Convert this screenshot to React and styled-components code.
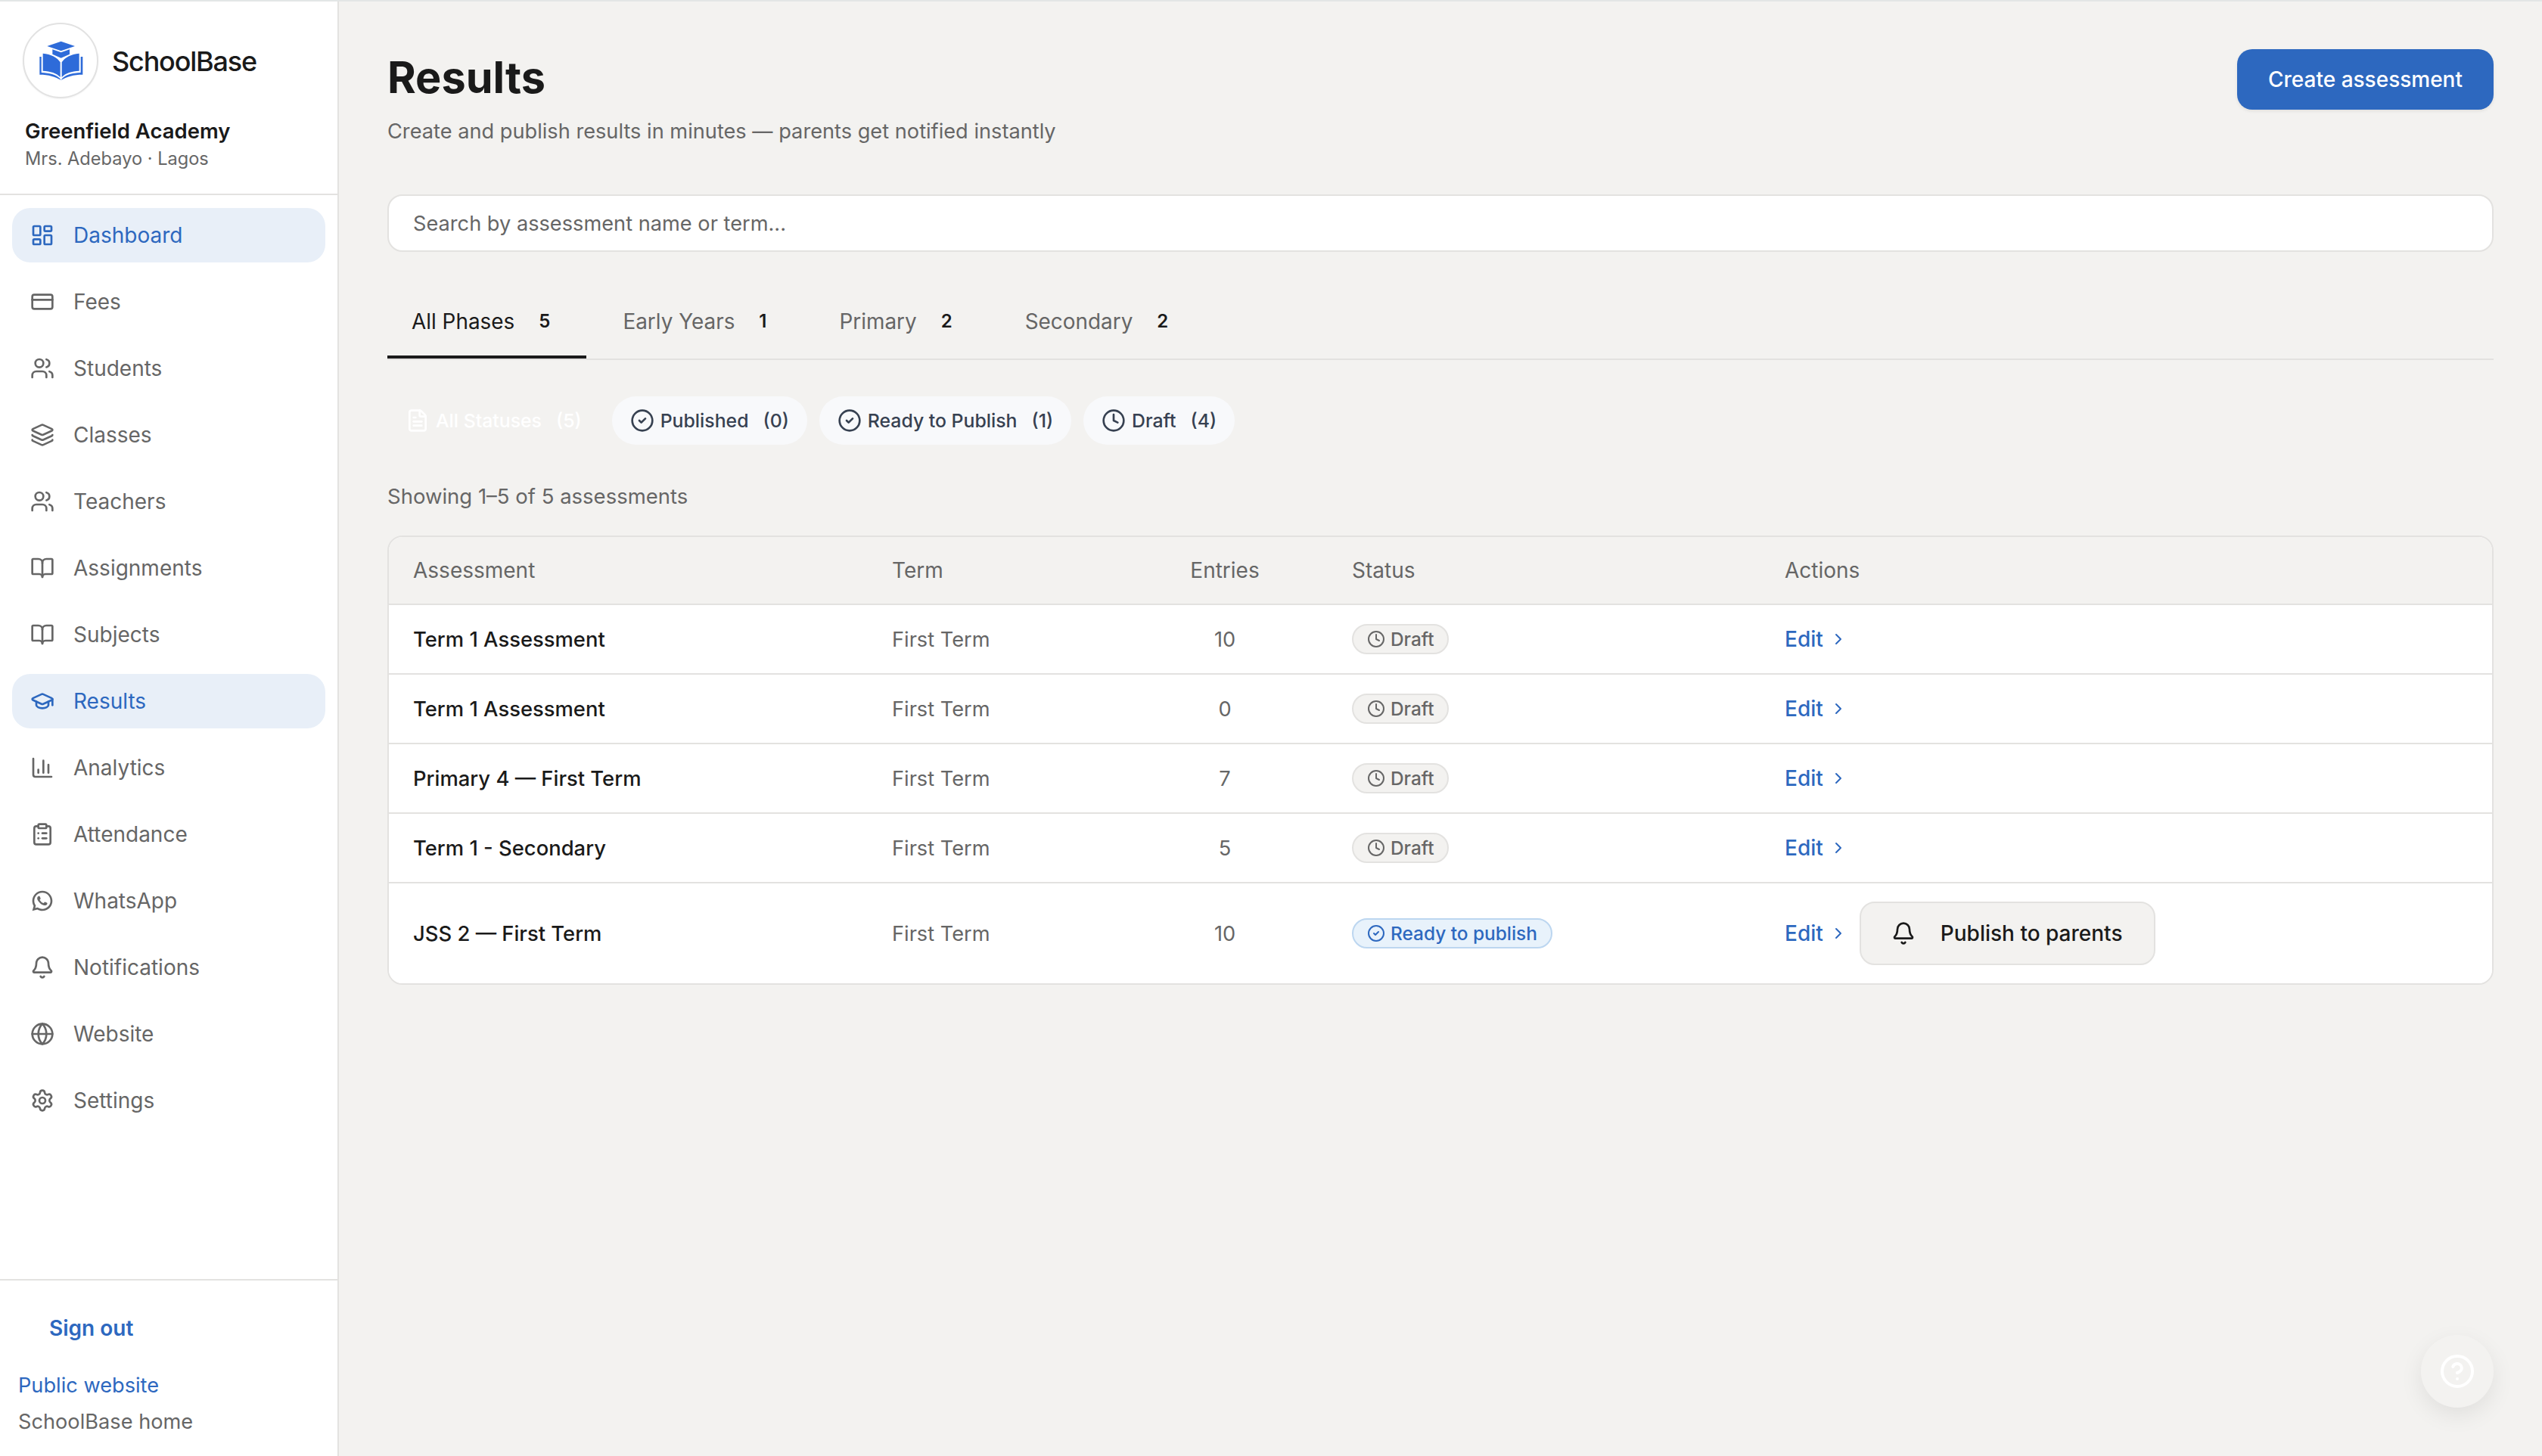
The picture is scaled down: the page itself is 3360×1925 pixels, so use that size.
import styled, { createGlobalStyle } from 'styled-components';
import {
	LayoutDashboard,
	CreditCard,
	Users,
	Layers,
	BookOpen,
	GraduationCap,
	ChartColumn,
	ClipboardList,
	Bell,
	Globe,
	Settings,
	FileText,
	CircleCheck,
	Clock,
	ChevronRight,
	CircleHelp,
} from 'lucide-react';
import { RiWhatsappLine } from 'react-icons/ri';

const BLUE = '#2d68bf';
const INK = '#1a1a1a';
const MUTED = '#666666';
const LINE = '#e3e2e0';
const PAGE = '#f3f2f0';

const GlobalStyle = createGlobalStyle`
	* {
		box-sizing: border-box;
	}
	html, body {
		margin: 0;
		padding: 0;
		background: ${PAGE};
	}
	body {
		font-family: Inter, 'Liberation Sans', sans-serif;
		color: ${INK};
	}
`;

const Page = styled.div`
	display: flex;
	height: 1925px;
	border-top: 2px solid #e3e6e6;
	background: ${PAGE};
`;

const Sidebar = styled.aside`
	flex: 0 0 448px;
	display: flex;
	flex-direction: column;
	background: #fff;
	border-right: 2px solid ${LINE};
`;

const SidebarHead = styled.div`
	padding: 28px 32px 0 33px;
	height: 256px;
	border-bottom: 2px solid ${LINE};
`;

const Brand = styled.div`
	display: flex;
	align-items: center;
	gap: 18px;
	margin-left: -3px;
`;

const LogoCircle = styled.div`
	width: 100px;
	height: 100px;
	border-radius: 50%;
	border: 2px solid #e2e2e2;
	background: #fff;
	box-shadow: 0 1px 2px rgba(0, 0, 0, 0.05);
	display: flex;
	align-items: center;
	justify-content: center;
	flex-shrink: 0;
`;

const LogoMark = styled.svg`
	flex-shrink: 0;
	fill: #2e6bd9;
`;

const BrandName = styled.span`
	position: relative;
	top: 1px;
	font-size: 36px;
	font-weight: 500;
	letter-spacing: -1.2px;
`;

const SchoolName = styled.div`
	margin-top: 25px;
	font-size: 27.5px;
	line-height: 36px;
	font-weight: 600;
`;

const SchoolMeta = styled.div`
	margin-top: 3px;
	font-size: 23.6px;
	line-height: 32px;
	color: ${MUTED};
`;

const Nav = styled.nav`
	display: flex;
	flex-direction: column;
	gap: 16px;
	padding: 17px 16px 0;
`;

const NavItem = styled.a`
	display: flex;
	align-items: center;
	gap: 25px;
	height: 72px;
	padding-left: 24px;
	border-radius: 24px;
	font-size: 28px;
	color: ${(p) => (p.$active ? BLUE : MUTED)};
	background: ${(p) => (p.$active ? '#e8eff8' : 'transparent')};
	svg {
		flex-shrink: 0;
	}
`;

const SidebarFoot = styled.div`
	margin-top: auto;
	border-top: 2px solid ${LINE};
	padding: 45px 24px 27px;
`;

const SignOut = styled.a`
	display: block;
	padding-left: 41px;
	font-size: 28px;
	line-height: 36px;
	font-weight: 600;
	color: ${BLUE};
`;

const FootLink = styled.a`
	display: block;
	font-size: 27.2px;
	line-height: 36px;
	color: ${(p) => (p.$blue ? BLUE : MUTED)};
	margin-top: ${(p) => (p.$blue ? '40px' : '12px')};
`;

const Main = styled.main`
	flex: 1;
	min-width: 0;
	padding: 63px 64px 0;
`;

const Header = styled.header`
	display: flex;
	justify-content: space-between;
	align-items: flex-start;
`;

const Title = styled.h1`
	margin: 1px 0 0;
	font-size: 57.6px;
	line-height: 72px;
	font-weight: 700;
`;

const Subtitle = styled.p`
	margin: 16px 0 0;
	font-size: 27.2px;
	line-height: 40px;
	color: ${MUTED};
`;

const CreateButton = styled.button`
	height: 80px;
	padding: 0 41px;
	border: none;
	border-radius: 20px;
	background: ${BLUE};
	color: #fff;
	font-family: inherit;
	font-size: 28px;
	font-weight: 500;
	box-shadow: 0 2px 4px rgba(0, 0, 0, 0.08);
`;

const Search = styled.input`
	display: block;
	width: 100%;
	height: 76px;
	margin-top: 63px;
	padding: 0 32px;
	border: 2px solid ${LINE};
	border-radius: 20px;
	background: #fff;
	font-family: inherit;
	font-size: 27.2px;
	color: ${INK};
	&::placeholder {
		color: ${MUTED};
		opacity: 1;
	}
`;

const Tabs = styled.div`
	display: flex;
	gap: 16px;
	margin-top: 32px;
	border-bottom: 2px solid ${LINE};
`;

const Tab = styled.div`
	display: flex;
	align-items: center;
	gap: 16px;
	padding: 40px 32px 25px;
	font-size: 27.9px;
	line-height: 40px;
	color: ${(p) => (p.$active ? INK : MUTED)};
	border-bottom: 4px solid ${(p) => (p.$active ? INK : 'transparent')};
`;

const TabCount = styled.span`
	padding: 0 16px;
	font-size: 24px;
	font-weight: 600;
	color: ${INK};
`;

const Pills = styled.div`
	display: flex;
	gap: 16px;
	margin-top: 48px;
`;

const Pill = styled.div`
	display: flex;
	align-items: center;
	gap: 8px;
	height: 64px;
	padding: 0 24px;
	border-radius: 32px;
	font-size: 24.8px;
	font-weight: 500;
	color: ${(p) => (p.$active ? '#fff' : '#374151')};
	background: ${(p) => (p.$active ? 'transparent' : '#f8f9fb')};
`;

const PillCount = styled.span`
	margin-left: 11px;
`;

const Showing = styled.div`
	margin-top: 48px;
	font-size: 27.5px;
	line-height: 40px;
	color: ${MUTED};
`;

const Table = styled.div`
	margin-top: 32px;
	border: 2px solid ${LINE};
	border-radius: 20px;
	overflow: hidden;
	background: #fff;
`;

const Row = styled.div`
	display: grid;
	grid-template-columns: 633px 394px 214px 572px 1fr;
	align-items: center;
	height: ${(p) => p.$height || 92}px;
	background: ${(p) => (p.$head ? PAGE : '#fff')};
	border-bottom: ${(p) => (p.$last ? 'none' : `2px solid ${LINE}`)};
`;

const Cell = styled.div`
	display: flex;
	align-items: center;
	padding: 0 32px;
	font-size: ${(p) => (p.$head ? 28 : p.$strong ? 27.4 : 27.2)}px;
	color: ${(p) => (p.$strong ? INK : MUTED)};
	font-weight: ${(p) => (p.$strong ? 500 : 400)};
`;

const EntriesCell = styled(Cell)`
	justify-content: center;
	padding-right: 90px;
`;

const Badge = styled.span`
	display: inline-flex;
	align-items: center;
	gap: 7px;
	height: 40px;
	padding: 0 18px;
	border-radius: 20px;
	font-size: 24.4px;
	font-weight: 500;
	color: ${(p) => (p.$ready ? BLUE : MUTED)};
	background: ${(p) => (p.$ready ? '#e8f2fb' : PAGE)};
	border: 2px solid ${(p) => (p.$ready ? '#bcd6f0' : LINE)};
`;

const Actions = styled.div`
	display: flex;
	align-items: center;
	gap: 16px;
	padding-left: 32px;
`;

const Edit = styled.a`
	display: inline-flex;
	align-items: center;
	gap: 8px;
	font-size: 28px;
	font-weight: 500;
	color: ${BLUE};
`;

const PublishButton = styled.button`
	display: flex;
	align-items: center;
	gap: 33px;
	height: 84px;
	padding: 0 42px 0 40px;
	border: 2px solid ${LINE};
	border-radius: 20px;
	background: ${PAGE};
	color: ${INK};
	font-family: inherit;
	font-size: 28px;
	font-weight: 500;
`;

const HelpButton = styled.button`
	position: fixed;
	right: 64px;
	bottom: 64px;
	width: 96px;
	height: 96px;
	border: none;
	border-radius: 50%;
	background: ${PAGE};
	color: #fff;
	display: flex;
	align-items: center;
	justify-content: center;
	box-shadow: 0 10px 30px rgba(0, 0, 0, 0.08);
`;

const navItems = [
	{ label: 'Dashboard', Icon: LayoutDashboard, active: true },
	{ label: 'Fees', Icon: CreditCard },
	{ label: 'Students', Icon: Users },
	{ label: 'Classes', Icon: Layers },
	{ label: 'Teachers', Icon: Users },
	{ label: 'Assignments', Icon: BookOpen },
	{ label: 'Subjects', Icon: BookOpen },
	{ label: 'Results', Icon: GraduationCap, active: true },
	{ label: 'Analytics', Icon: ChartColumn },
	{ label: 'Attendance', Icon: ClipboardList },
	{ label: 'WhatsApp', Icon: RiWhatsappLine },
	{ label: 'Notifications', Icon: Bell },
	{ label: 'Website', Icon: Globe },
	{ label: 'Settings', Icon: Settings },
];

const tabs = [
	{ label: 'All Phases', count: 5, active: true },
	{ label: 'Early Years', count: 1 },
	{ label: 'Primary', count: 2 },
	{ label: 'Secondary', count: 2 },
];

const pills = [
	{ label: 'All Statuses', count: 5, Icon: FileText, active: true },
	{ label: 'Published', count: 0, Icon: CircleCheck },
	{ label: 'Ready to Publish', count: 1, Icon: CircleCheck },
	{ label: 'Draft', count: 4, Icon: Clock },
];

const rows = [
	{ name: 'Term 1 Assessment', entries: 10 },
	{ name: 'Term 1 Assessment', entries: 0 },
	{ name: 'Primary 4 — First Term', entries: 7 },
	{ name: 'Term 1 - Secondary', entries: 5 },
	{ name: 'JSS 2 — First Term', entries: 10, ready: true },
];

function Logo() {
	return (
		<LogoMark width='100' height='100' viewBox='30 30 300 300'>
			<path d='M127 123 182 104 237 123 182 142Z' />
			<path d='M148 136 182 148 216 136V155L182 170 148 155Z' />
			<path d='M110 152C142 155 168 168 179 187V246C164 230 140 222 110 221Z' />
			<path d='M254 152C222 155 196 168 185 187V246C200 230 224 222 254 221Z' />
			<path d='M97 165H104V228C135 229 162 236 176 250L182 258 188 250C202 236 229 229 260 228V165H268V236C232 236 204 244 182 258 160 244 132 236 97 236Z' />
		</LogoMark>
	);
}

export default function App() {
	return (
		<Page>
			<GlobalStyle />
			<Sidebar>
				<SidebarHead>
					<Brand>
						<LogoCircle>
							<Logo />
						</LogoCircle>
						<BrandName>SchoolBase</BrandName>
					</Brand>
					<SchoolName>Greenfield Academy</SchoolName>
					<SchoolMeta>Mrs. Adebayo · Lagos</SchoolMeta>
				</SidebarHead>
				<Nav>
					{navItems.map(({ label, Icon, active }) => (
						<NavItem key={label} $active={active}>
							<Icon size={32} />
							{label}
						</NavItem>
					))}
				</Nav>
				<SidebarFoot>
					<SignOut>Sign out</SignOut>
					<FootLink $blue>Public website</FootLink>
					<FootLink>SchoolBase home</FootLink>
				</SidebarFoot>
			</Sidebar>
			<Main>
				<Header>
					<div>
						<Title>Results</Title>
						<Subtitle>Create and publish results in minutes — parents get notified instantly</Subtitle>
					</div>
					<CreateButton type='button'>Create assessment</CreateButton>
				</Header>
				<Search placeholder='Search by assessment name or term...' />
				<Tabs>
					{tabs.map((tab) => (
						<Tab key={tab.label} $active={tab.active}>
							{tab.label}
							<TabCount>{tab.count}</TabCount>
						</Tab>
					))}
				</Tabs>
				<Pills>
					{pills.map(({ label, count, Icon, active }) => (
						<Pill key={label} $active={active}>
							<Icon size={32} />
							{label}
							<PillCount>({count})</PillCount>
						</Pill>
					))}
				</Pills>
				<Showing>Showing 1–5 of 5 assessments</Showing>
				<Table>
					<Row $head $height={90}>
						<Cell $head>Assessment</Cell>
						<Cell $head>Term</Cell>
						<EntriesCell $head>Entries</EntriesCell>
						<Cell $head>Status</Cell>
						<Cell $head>Actions</Cell>
					</Row>
					{rows.map((row, i) => (
						<Row key={i} $last={row.ready} $height={row.ready ? 132 : 92}>
							<Cell $strong>{row.name}</Cell>
							<Cell>First Term</Cell>
							<EntriesCell>{row.entries}</EntriesCell>
							<Cell>
								{row.ready ? (
									<Badge $ready>
										<CircleCheck size={24} />
										Ready to publish
									</Badge>
								) : (
									<Badge>
										<Clock size={24} />
										Draft
									</Badge>
								)}
							</Cell>
							<Actions>
								<Edit>
									Edit
									<ChevronRight size={24} />
								</Edit>
								{row.ready && (
									<PublishButton type='button'>
										<Bell size={32} />
										Publish to parents
									</PublishButton>
								)}
							</Actions>
						</Row>
					))}
				</Table>
			</Main>
			<HelpButton type='button' aria-label='Help'>
				<CircleHelp size={48} />
			</HelpButton>
		</Page>
	);
}
